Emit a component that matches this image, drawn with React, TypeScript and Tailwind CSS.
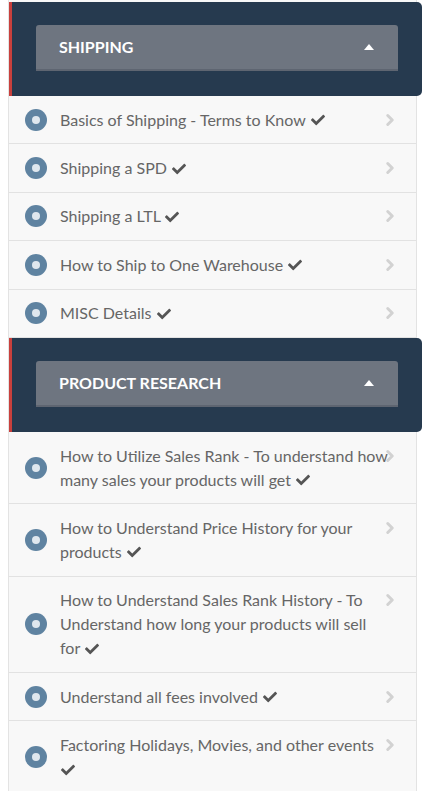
import { ChevronRight } from "lucide-react";

type Lesson = { title: string };

const sections: { name: string; lessons: Lesson[] }[] = [
  {
    name: "Shipping",
    lessons: [
      { title: "Basics of Shipping - Terms to Know" },
      { title: "Shipping a SPD" },
      { title: "Shipping a LTL" },
      { title: "How to Ship to One Warehouse" },
      { title: "MISC Details" },
    ],
  },
  {
    name: "Product Research",
    lessons: [
      { title: "How to Utilize Sales Rank - To understand how many sales your products will get" },
      { title: "How to Understand Price History for your products" },
      { title: "How to Understand Sales Rank History - To Understand how long your products will sell for" },
      { title: "Understand all fees involved" },
      { title: "Factoring Holidays, Movies, and other events" },
    ],
  },
];

const Check = () => (
  <svg viewBox="0 0 512 512" className="inline-block w-[14px] h-[14px] ml-[1px] -mt-[3px] fill-[#555]">
    <path d="M173.9 439.4 7.5 273c-10-10-10-26.2 0-36.2l36.2-36.2c10-10 26.2-10 36.2 0L192 312.7 432.1 72.6c10-10 26.2-10 36.2 0l36.2 36.2c10 10 10 26.2 0 36.2L210.1 439.4c-10 10-26.2 10-36.2 0z" />
  </svg>
);

const SectionHeader = ({ name }: { name: string }) => (
  <div className="mr-[-6px] bg-[#263a4f] border-l-[3px] border-[#c8403d] rounded-r-[5px] pl-[24px] pr-[24px] pt-[23px] pb-[25px]">
    <div className="flex items-center justify-between h-[46px] bg-[#6e7580] border-b-2 border-[#5e6571] rounded-t-[3px] pl-[23px] pr-[24px]">
      <span className="text-white font-bold text-[16px] uppercase">{name}</span>
      <svg viewBox="0 0 10 6" className="w-[10px] h-[6px] fill-white">
        <path d="M0 6 5 0 10 6z" />
      </svg>
    </div>
  </div>
);

const LessonRow = ({ lesson }: { lesson: Lesson }) => (
  <div className="flex items-center bg-[#f8f8f8] border-b border-[#e2e2e2] pl-[16px] pr-[22px] py-[11.7px]">
    <div className="shrink-0 w-[22px] h-[22px] rounded-full bg-[#5f83a1] flex items-center justify-center">
      <div className="w-[8px] h-[8px] rounded-full bg-[#dfe7ee]" />
    </div>
    <div className="relative flex-1 ml-[13px]">
      <p className="w-[328px] text-[16px] leading-6 text-[#666]">
        {lesson.title} <Check />
      </p>
      <ChevronRight
        className="absolute right-[-5px] top-[3px] w-[18px] h-[18px] text-[#d2d2d2]"
        strokeWidth={4}
      />
    </div>
  </div>
);

export default function App() {
  return (
    <div className="min-h-screen bg-white font-['Lato',sans-serif] pl-[8px]">
      <div className="w-[409px] border-l border-r border-[#e3e3e3] bg-[#f8f8f8] pt-[2px]">
        {sections.map((section) => (
          <div key={section.name}>
            <SectionHeader name={section.name} />
            {section.lessons.map((lesson) => (
              <LessonRow key={lesson.title} lesson={lesson} />
            ))}
          </div>
        ))}
      </div>
    </div>
  );
}
